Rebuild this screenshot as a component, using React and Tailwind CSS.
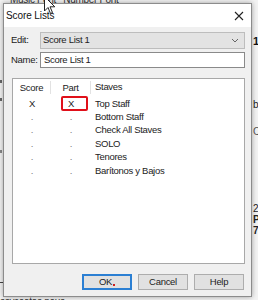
export default function App() {
  const font = { fontFamily: '"Liberation Sans", Arial, sans-serif' };
  const rows = [
    { s: "X", p: "X", name: "Top Staff", box: true },
    { s: ".", p: ".", name: "Bottom Staff" },
    { s: ".", p: ".", name: "Check All Staves" },
    { s: ".", p: ".", name: "SOLO" },
    { s: ".", p: ".", name: "Tenores" },
    { s: ".", p: ".", name: "Barítonos y Bajos" },
  ];
  return (
    <div
      className="relative w-[258px] h-[300px] overflow-hidden bg-[#f3f3f3] text-[#222] text-[9.5px] tracking-[-0.3px]"
      style={font}
    >
      {/* background fragments */}
      <div className="absolute left-[10px] top-[-8px] text-[10px] text-[#333] whitespace-nowrap">Music Font&nbsp;&nbsp;&nbsp;Number Font</div>
      <div className="absolute left-[253px] top-[33px] text-[11px] font-bold text-[#111]">1</div>
      <div className="absolute left-[253px] top-[97px] text-[10px] text-[#222]">b</div>
      <div className="absolute left-[253px] top-[124px] text-[10px] text-[#555]">C</div>
      <div className="absolute left-[253px] top-[201px] text-[10px] text-[#222]">2</div>
      <div className="absolute left-[253px] top-[212px] text-[10px] font-bold text-[#222]">P</div>
      <div className="absolute left-[253px] top-[223px] text-[10px] font-bold text-[#222]">7</div>
      <div className="absolute left-[0px] top-[80px] w-[2px] h-[3px] bg-[#666]" />
      <div className="absolute left-[0px] top-[98px] w-[2px] h-[3px] bg-[#666]" />
      <div className="absolute left-[0px] top-[150px] w-[2px] h-[3px] bg-[#888]" />
      <div className="absolute left-[0px] top-[282px] w-[3px] h-[1px] bg-[#444]" />
      <div className="absolute left-[0px] top-[294px] text-[10px] text-[#333] whitespace-nowrap">ssycoatas nous</div>

      {/* dialog window */}
      <div className="absolute left-[3px] top-[3px] w-[249px] h-[294px] bg-[#f0f0f0] border border-[#8c8c8c] shadow-[0_0_5px_rgba(0,0,0,0.35)] flex flex-col">
        {/* title bar */}
        <div className="h-[23px] bg-white flex items-center justify-between pl-[2px] pr-[7px]">
          <span className="text-[10px] text-[#111] tracking-[-0.1px]">Score Lists</span>
          <svg width="10" height="10" viewBox="0 0 10 10">
            <path d="M1 1L9 9M9 1L1 9" stroke="#222" strokeWidth="1.1" />
          </svg>
        </div>

        {/* body */}
        <div className="flex flex-col pl-[7px] pr-[6px] pt-[5px]">
          <div className="flex items-center h-[17px]">
            <span className="w-[29px]">Edit:</span>
            <div className="flex-1 h-full bg-[#e3e3e3] border border-[#bdbdbd] flex items-center justify-between pl-[2px] pr-[5px]">
              <span>Score List 1</span>
              <svg width="8" height="5" viewBox="0 0 8 5">
                <path d="M1 1L4 4L7 1" stroke="#666" strokeWidth="1" fill="none" />
              </svg>
            </div>
          </div>
          <div className="flex items-center h-[16px] mt-[3px]">
            <span className="w-[29px]">Name:</span>
            <div className="flex-1 h-full bg-white border border-[#8a8a8a] flex items-center pl-[3px]">
              <span>Score List 1</span>
            </div>
          </div>

          {/* list */}
          <div className="mt-[10px] ml-[1px] h-[186px] bg-white border border-[#a8a8a8] flex flex-col">
            <div className="flex h-[17px] items-center">
              <div className="w-[38px] text-center border-r border-[#e2e2e2] h-[13px] leading-[13px]">Score</div>
              <div className="w-[40px] text-center border-r border-[#e2e2e2] h-[13px] leading-[13px]">Part</div>
              <div className="pl-[4px]">Staves</div>
            </div>
            <div className="flex flex-col pt-[1px]">
              {rows.map((r, i) => (
                <div key={i} className="flex h-[13.4px] items-center">
                  <div className={r.s === "." ? "w-[38px] text-center text-[#777]" : "w-[38px] text-center"}>{r.s}</div>
                  <div className={r.p === "." ? "w-[40px] text-center relative h-full flex items-center justify-center text-[#777]" : "w-[40px] text-center relative h-full flex items-center justify-center"}>
                    {r.p}
                    {r.box && (
                      <div className="absolute left-[10px] top-[-1px] w-[27px] h-[15px] border-2 border-[#e0101a] rounded-[2px]" />
                    )}
                  </div>
                  <div className="pl-[4px]">{r.name}</div>
                </div>
              ))}
            </div>
          </div>

          {/* buttons */}
          <div className="flex justify-end mt-[10px] gap-[6px] pr-[1px]">
            <div className="w-[50px] h-[16px] bg-[#e1e1e1] border-2 border-[#2b7fd3] flex items-center justify-center">
              <span>OK</span>
              <span className="inline-block w-[2px] h-[2px] bg-[#d02020] mt-[6px] ml-[1px]" />
            </div>
            <div className="w-[50px] h-[16px] bg-[#e1e1e1] border border-[#adadad] flex items-center justify-center">Cancel</div>
            <div className="w-[50px] h-[16px] bg-[#e1e1e1] border border-[#adadad] flex items-center justify-center">Help</div>
          </div>
        </div>
      </div>

      {/* mouse cursor */}
      <svg className="absolute left-[44px] top-[-4px]" width="12" height="19" viewBox="0 0 12 19">
        <path d="M0.5 0.5L0.5 15L4 11.5L6.5 17.5L8.5 16.5L6 10.8L10.8 10.8Z" fill="white" stroke="#222" strokeWidth="1" strokeLinejoin="round" />
      </svg>
    </div>
  );
}
